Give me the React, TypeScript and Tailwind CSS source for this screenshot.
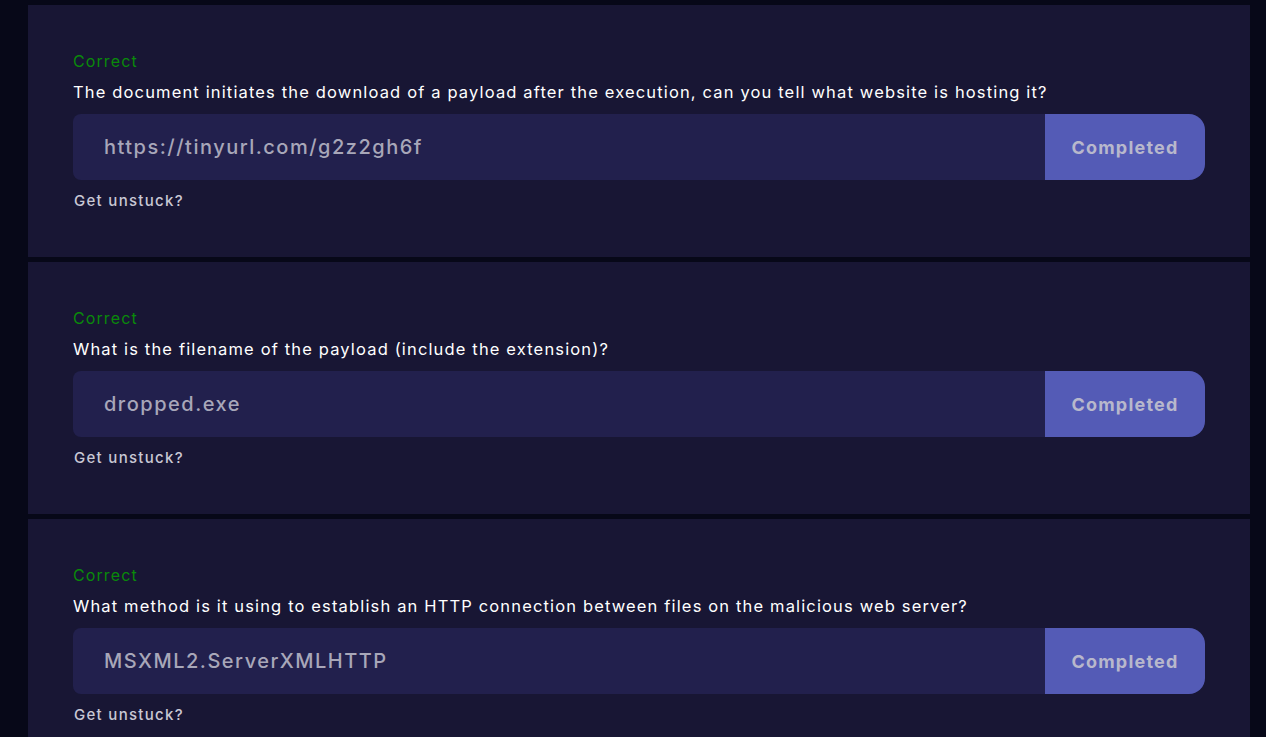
import React from 'react';

type Task = { question: string; answer: string };

const tasks: Task[] = [
  {
    question:
      'The document initiates the download of a payload after the execution, can you tell what website is hosting it?',
    answer: 'https://tinyurl.com/g2z2gh6f',
  },
  {
    question: 'What is the filename of the payload (include the extension)?',
    answer: 'dropped.exe',
  },
  {
    question:
      'What method is it using to establish an HTTP connection between files on the malicious web server?',
    answer: 'MSXML2.ServerXMLHTTP',
  },
];

const TaskCard: React.FC<{ task: Task }> = ({ task }) => (
  <div className="bg-[#181634] h-[252px] shrink-0 pl-[45px] pr-[45px] pt-[42px]">
    <p className="text-[16px] leading-[28px] tracking-[1.1px] text-[#0a8a0a]">Correct</p>
    <p className="mt-[3px] text-[16.5px] leading-[28px] tracking-[1.15px] text-white">{task.question}</p>
    <div className="flex h-[66px] mt-[8px]">
      <div className="flex-1 bg-[#22204d] rounded-l-[8px] flex items-center pl-[31px] text-[20px] font-medium text-[#a8a7b9] tracking-[1.5px]">
        {task.answer}
      </div>
      <div className="w-[160px] bg-[#545bb6] rounded-r-[16px] flex items-center justify-center text-[18px] font-bold tracking-[1.2px] text-[#b8b8cc]">
        Completed
      </div>
    </div>
    <p className="mt-[10px] ml-px text-[15px] leading-[22px] font-medium tracking-[1.3px] text-[#c9c8d4]">Get unstuck?</p>
  </div>
);

export default function App() {
  return (
    <div
      className="w-[1266px] h-[737px] overflow-hidden bg-[#070818] pl-[28px] pr-[16px] pt-[5px] flex flex-col gap-[5px]"
      style={{ fontFamily: 'Inter, "Noto Sans", sans-serif' }}
    >
      {tasks.map((t, i) => (
        <TaskCard key={i} task={t} />
      ))}
    </div>
  );
}
